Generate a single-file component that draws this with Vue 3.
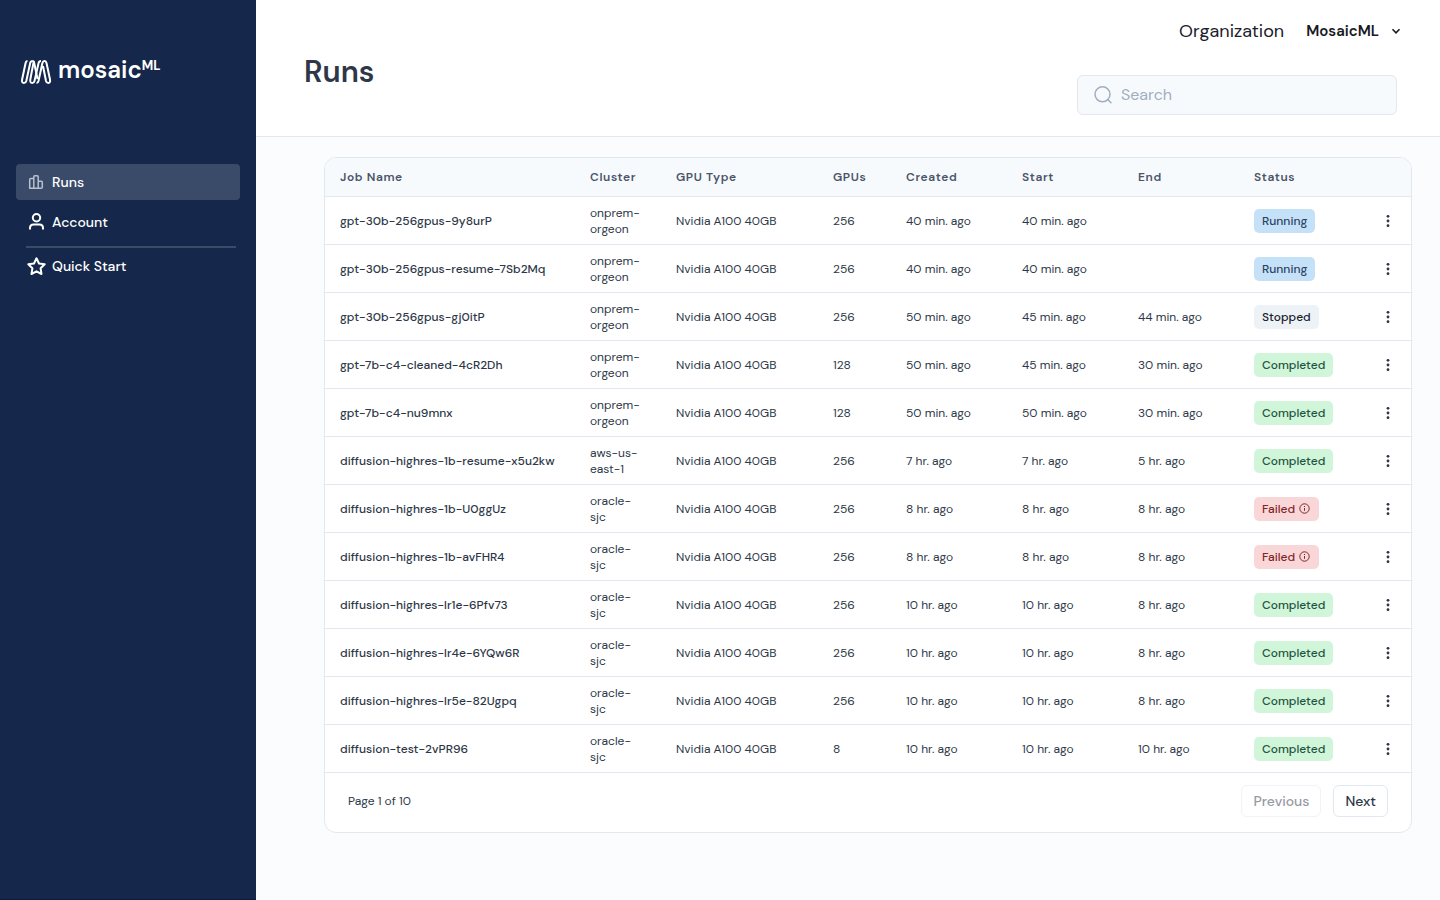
<script setup>
const runs = [
  ['gpt-30b-256gpus-9y8urP', 'onprem-orgeon', 256, '40 min. ago', '40 min. ago', '', 'Running'],
  ['gpt-30b-256gpus-resume-7Sb2Mq', 'onprem-orgeon', 256, '40 min. ago', '40 min. ago', '', 'Running'],
  ['gpt-30b-256gpus-gj0itP', 'onprem-orgeon', 256, '50 min. ago', '45 min. ago', '44 min. ago', 'Stopped'],
  ['gpt-7b-c4-cleaned-4cR2Dh', 'onprem-orgeon', 128, '50 min. ago', '45 min. ago', '30 min. ago', 'Completed'],
  ['gpt-7b-c4-nu9mnx', 'onprem-orgeon', 128, '50 min. ago', '50 min. ago', '30 min. ago', 'Completed'],
  ['diffusion-highres-1b-resume-x5u2kw', 'aws-us-east-1', 256, '7 hr. ago', '7 hr. ago', '5 hr. ago', 'Completed'],
  ['diffusion-highres-1b-U0ggUz', 'oracle-sjc', 256, '8 hr. ago', '8 hr. ago', '8 hr. ago', 'Failed'],
  ['diffusion-highres-1b-avFHR4', 'oracle-sjc', 256, '8 hr. ago', '8 hr. ago', '8 hr. ago', 'Failed'],
  ['diffusion-highres-lr1e-6Pfv73', 'oracle-sjc', 256, '10 hr. ago', '10 hr. ago', '8 hr. ago', 'Completed'],
  ['diffusion-highres-lr4e-6YQw6R', 'oracle-sjc', 256, '10 hr. ago', '10 hr. ago', '8 hr. ago', 'Completed'],
  ['diffusion-highres-lr5e-82Ugpq', 'oracle-sjc', 256, '10 hr. ago', '10 hr. ago', '8 hr. ago', 'Completed'],
  ['diffusion-test-2vPR96', 'oracle-sjc', 8, '10 hr. ago', '10 hr. ago', '10 hr. ago', 'Completed'],
].map(([name, cluster, gpus, created, start, end, status]) => ({ name, cluster, gpus, created, start, end, status }))
</script>

<template>
  <div class="app">
    <aside class="sidebar">
      <a class="logo" href="#" aria-label="mosaicML">
        <svg class="mark" width="32" height="26" viewBox="0 0 32 26" fill="none" stroke="#fff" stroke-width="2" stroke-linecap="butt" stroke-linejoin="round">
          <path d="M7.500 2Q6 2 5.600 4L2.100 20.500Q1.500 24 3.900 24Q5.800 24 6.300 22L10.200 4Q10.700 2 12.800 2" />
          <path d="M13.800 2L10.300 20.500Q9.800 24 12.200 24Q14 24 14.500 22L18.600 4Q19.100 2 21 2" />
          <path d="M12.800 2Q13.800 2 14.200 4L17.500 20" />
          <path d="M16.500 24Q18 24 18.500 22L22.400 4Q22.900 2 24.600 2Q26 2 26.500 4L30 20.500Q30.600 24 28.300 24Q26.500 24 26 22L23 7" />
        </svg>
        <span class="wordmark">mosaic</span><span class="ml">ML</span>
      </a>
      <nav class="nav">
        <a class="item active" href="#">
          <svg class="nav-icon dim" viewBox="0 0 20 20" fill="none" stroke="currentColor" stroke-width="1.500" stroke-linejoin="round">
            <path d="M3.700 16.300V7.400Q3.700 6.400 4.700 6.400H7.800V16.300ZM7.800 16.300V4.700Q7.800 3.700 8.800 3.700H11.200Q12.200 3.700 12.200 4.700V16.300ZM12.200 9.300H15.300Q16.300 9.300 16.300 10.300V15.300Q16.300 16.300 15.300 16.300H12.200ZM4.700 16.300H15.300" />
          </svg>
          <span>Runs</span>
        </a>
        <a class="item" href="#">
          <svg class="nav-icon" viewBox="0 0 20 20" fill="none" stroke="currentColor" stroke-width="2">
            <circle cx="10.500" cy="5.800" r="3.700" />
            <path d="M4 17.500V16Q4 12.500 7.500 12.500H13.500Q17 12.500 17 16V17.500" />
          </svg>
          <span>Account</span>
        </a>
        <hr class="rule" />
        <a class="item" href="#">
          <svg class="nav-icon" viewBox="0 0 20 20" fill="none" stroke="currentColor" stroke-width="2" stroke-linejoin="round">
            <path d="M10.500 2.300L13 7.500L18.700 8.300L14.600 12.300L15.500 18L10.500 15.300L5.500 18L6.400 12.300L2.300 8.300L8 7.500Z" />
          </svg>
          <span>Quick Start</span>
        </a>
      </nav>
    </aside>

    <div class="content">
      <header class="top">
        <h1>Runs</h1>
        <div class="tools">
          <div class="org">
            <span class="org-label">Organization</span>
            <button class="org-button" type="button" aria-label="Organization: MosaicML">
              MosaicML
              <svg width="10" height="10" viewBox="0 0 10 10" fill="none" stroke="currentColor" stroke-width="1.600"><path d="M1.500 3.300L5 6.800L8.500 3.300" /></svg>
            </button>
          </div>
          <label class="search">
            <svg width="20" height="20" viewBox="0 0 20 20" fill="none" stroke="#A0AEC0" stroke-width="1.500" stroke-linecap="round"><circle cx="9.500" cy="9.300" r="7.500" /><path d="M15 14.800L18 17.800" /></svg>
            <input type="search" placeholder="Search" aria-label="Search" />
          </label>
        </div>
      </header>

      <main class="main">
        <section class="card">
          <table>
            <colgroup>
              <col class="c-name" /><col class="c-cluster" /><col class="c-type" /><col class="c-gpus" />
              <col class="c-time" /><col class="c-time" /><col class="c-time" /><col class="c-status" /><col class="c-menu" />
            </colgroup>
            <thead>
              <tr>
                <th>Job Name</th><th>Cluster</th><th>GPU Type</th><th>GPUs</th><th>Created</th><th>Start</th><th>End</th><th>Status</th><th></th>
              </tr>
            </thead>
            <tbody>
              <tr v-for="run in runs" :key="run.name">
                <td class="name">{{ run.name }}</td>
                <td class="cluster">{{ run.cluster }}</td>
                <td>Nvidia A100 40GB</td>
                <td>{{ run.gpus }}</td>
                <td>{{ run.created }}</td>
                <td>{{ run.start }}</td>
                <td>{{ run.end }}</td>
                <td>
                  <span class="badge" :class="run.status.toLowerCase()">
                    {{ run.status }}
                    <svg v-if="run.status === 'Failed'" width="13" height="13" viewBox="0 0 13 13" fill="none" stroke="currentColor"><circle cx="6.500" cy="6.500" r="4.700" /><path d="M6.500 6V8.800M6.500 4V5" /></svg>
                  </span>
                </td>
                <td class="menu">
                  <button type="button" :aria-label="`Actions for ${run.name}`">
                    <svg width="16" height="16" viewBox="0 0 16 16" fill="currentColor"><circle cx="8" cy="3.300" r="1.400" /><circle cx="8" cy="8" r="1.400" /><circle cx="8" cy="12.700" r="1.400" /></svg>
                  </button>
                </td>
              </tr>
            </tbody>
          </table>
          <footer class="pager">
            <span>Page 1 of 10</span>
            <div class="pager-buttons">
              <button type="button" disabled>Previous</button>
              <button type="button">Next</button>
            </div>
          </footer>
        </section>
      </main>
    </div>
  </div>
</template>

<style>
body { margin: 0; }
</style>

<style scoped>
.app { display: flex; min-height: 100vh; box-sizing: border-box; font-family: "DM Sans", Inter, "Liberation Sans", sans-serif; color: #2D3748; background: #FBFCFE; }
.app *, .app *::before { box-sizing: border-box; }
button, input { font: inherit; color: inherit; }
svg { display: block; flex: none; }

.sidebar { flex: 0 0 256px; background: #15284B; color: #fff; padding: 59px 16px 0; border-bottom: 1px solid #0D1B36; }
.logo { display: flex; align-items: center; height: 26px; margin-left: 4px; color: #fff; text-decoration: none; }
.wordmark { margin-left: 6px; font-size: 24px; font-weight: 600; line-height: 24px; padding-bottom: 4px; }
.ml { align-self: flex-start; font-size: 13px; font-weight: 700; line-height: 14px; }
.nav { display: flex; flex-direction: column; gap: 4px; margin-top: 79px; }
.item { display: flex; align-items: center; gap: 6px; height: 36px; padding: 0 10px; border-radius: 4px; font-size: 14px; font-weight: 500; color: #fff; text-decoration: none; }
.item.active { background: #3A4B6A; }
.nav-icon { width: 20px; height: 20px; }
.dim { color: #B8C0CE; }
.rule { width: 210px; height: 2px; margin: 2px 0 -4px 10px; border: 0; background: #3D4A68; }

.content { flex: 1; min-width: 0; }
.top { display: flex; justify-content: space-between; align-items: flex-start; height: 137px; padding: 0 43px 0 48px; background: #fff; border-bottom: 1px solid #E2E8F0; }
h1 { margin: 52px 0 0; font-size: 30px; line-height: 40px; font-weight: 600; }
.tools { display: flex; flex-direction: column; align-items: flex-end; gap: 28px; padding-top: 15px; }
.org { display: flex; align-items: center; gap: 22px; height: 32px; }
.org-label { font-size: 18px; color: #1A202C; }
.org-button { display: flex; align-items: center; gap: 12px; margin-right: -4px; padding: 0; border: 0; background: none; font-size: 15px; font-weight: 600; color: #171923; }
.search { display: flex; align-items: center; gap: 8px; width: 320px; height: 40px; padding: 0 15px; border: 1px solid #E2E8F0; border-radius: 6px; background: #F7FAFD; }
.search input { flex: 1; min-width: 0; height: 20px; padding: 0 0 2px; border: 0; outline: 0; background: none; font-size: 16px; }
.search input::placeholder { color: #A0AEC0; opacity: 1; }

.main { padding: 20px 28px 20px 68px; }
.card { border: 1px solid #E2E8F0; border-radius: 12px; background: #fff; overflow: hidden; }
table { width: 100%; border-collapse: separate; border-spacing: 0; table-layout: fixed; font-size: 12px; line-height: 16px; }
.c-name { width: 250px; }
.c-cluster { width: 86px; }
.c-type { width: 157px; }
.c-gpus { width: 73px; }
.c-time, .c-status { width: 116px; }
th { height: 39px; padding: 0 15px; text-align: left; font-weight: 600; letter-spacing: 0.05em; color: #4A5568; background: #F7FAFD; border-bottom: 1px solid #E2E8F0; white-space: nowrap; }
td { height: 48px; padding: 0 15px; border-bottom: 1px solid #E2E8F0; white-space: nowrap; }
.name { font-weight: 500; }
.cluster { white-space: normal; }
.badge { display: inline-flex; align-items: center; gap: 3px; height: 24px; padding: 0 8px; border-radius: 5px; font-weight: 500; vertical-align: middle; }
.running { background: #C5E1F7; color: #2A4365; }
.stopped { background: #EDF2F7; color: #1A202C; }
.completed { background: #D0F5D8; color: #22543D; }
.failed { background: #F9D7D8; color: #822727; }
.menu button { display: block; margin-left: auto; padding: 0; border: 0; background: none; }
.pager { display: flex; justify-content: space-between; align-items: center; padding: 12px 23px 15px; font-size: 12px; line-height: 16px; }
.pager-buttons { display: flex; gap: 12px; }
.pager button { height: 32px; padding: 0 11px; border: 1px solid #E2E8F0; border-radius: 6px; background: #fff; font-size: 14px; font-weight: 500; }
.pager button:disabled { opacity: 0.5; }
</style>
